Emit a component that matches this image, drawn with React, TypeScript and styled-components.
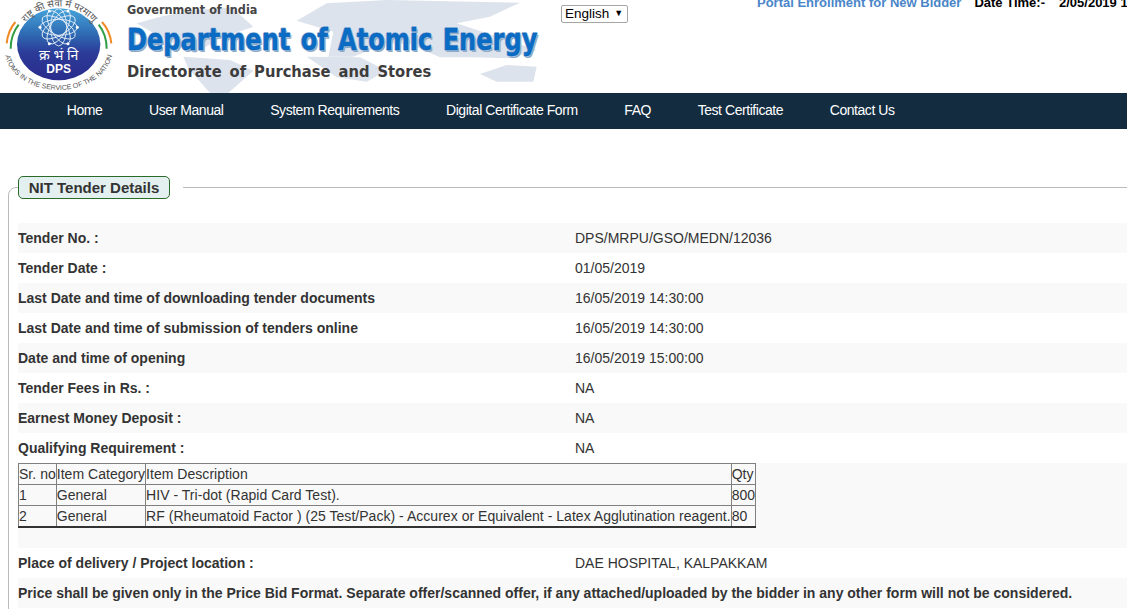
import React from 'react';
import styled, { createGlobalStyle } from 'styled-components';

const GlobalStyle = createGlobalStyle`
  html, body {
    margin: 0;
    padding: 0;
    overflow: hidden;
    background: #fff;
  }
  body {
    font-family: "Liberation Sans", Arial, sans-serif;
    font-size: 14px;
    color: #333;
  }
`;

const Page = styled.div`
  width: 1127px;
  height: 609px;
  overflow: hidden;
`;

const Header = styled.header`
  position: relative;
  height: 93px;
  display: flex;
  overflow: hidden;
`;

const LogoBox = styled.div`
  width: 127px;
  flex: none;
`;

const Banner = styled.div`
  position: relative;
  width: 434px;
  flex: none;
  display: flex;
  flex-direction: column;
`;

const WorldMap = styled.svg`
  position: absolute;
  left: 120px;
  top: 0;
`;

const GovLine = styled.div`
  font: bold 12.5px "DejaVu Sans", sans-serif;
  color: #444;
  height: 20px;
  line-height: 20px;
  white-space: nowrap;
  transform: scaleX(0.9);
  transform-origin: left;
`;

const DeptLine = styled.div`
  font: bold 31px "DejaVu Sans", sans-serif;
  color: #0a6cc4;
  height: 40px;
  line-height: 38px;
  white-space: nowrap;
  word-spacing: 2.5px;
  -webkit-text-stroke: 0.4px #0a5fb0;
  text-shadow: 1px 0 #a9c6e6, -1px 0 #a9c6e6, 0 1px #a9c6e6, 0 -1px #a9c6e6, 2px 2px #8fa9c4;
  transform: scaleX(0.777);
  transform-origin: left;
`;

const DirLine = styled.div`
  font: bold 15.5px "DejaVu Sans", sans-serif;
  color: #3c3c3c;
  height: 24px;
  line-height: 24px;
  margin-top: 0;
  white-space: nowrap;
  word-spacing: 3px;
  transform: scaleX(0.95);
  transform-origin: left;
`;

const LangSelect = styled.div`
  position: relative;
  align-self: flex-start;
  margin-top: 5px;
  width: 67px;
  height: 18px;
  flex: none;
  box-sizing: border-box;
  border: 1px solid #a6a6a6;
  border-radius: 2px;
  background: #fff;
  color: #000;
  font-size: 13.5px;
  line-height: 16px;
  padding-left: 3px;
  display: flex;
  gap: 5px;
`;

const Caret = styled.span`
  font-size: 9px;
  line-height: 14px;
`;

const TopLinks = styled.div`
  position: relative;
  margin-left: 129px;
  margin-top: -5px;
  display: flex;
  align-self: flex-start;
  white-space: nowrap;
  font-weight: bold;
  font-size: 13px;
  line-height: 16px;
`;

const EnrollLink = styled.a`
  color: #4a86c8;
  margin-right: 13px;
`;

const DateLabel = styled.span`
  color: #000;
  margin-right: 14px;
`;

const DateValue = styled.span`
  color: #000;
`;

const Nav = styled.nav`
  height: 36px;
  padding: 0 0 2px 43.5px;
  box-sizing: border-box;
  background: #132c40;
  display: flex;
  align-items: center;
`;

const NavItem = styled.a`
  color: #fff;
  font-size: 14px;
  letter-spacing: -0.45px;
  padding: 0 23.35px;
  white-space: nowrap;
`;

const Details = styled.fieldset`
  margin: 47px 0 0 8px;
  padding: 24px 0 0 9px;
  width: 1300px;
  box-sizing: border-box;
  border: 1px solid #bbb;
  border-radius: 8px 0 0 0;
  min-height: 500px;
`;

const DetailsLegend = styled.legend`
  padding: 0 13px 0 0;
`;

const LegendBadge = styled.div`
  box-sizing: border-box;
  width: 152px;
  height: 23px;
  line-height: 21px;
  text-align: center;
  background: #e3f0ef;
  border: 1px solid #2a6b2a;
  border-radius: 5px;
  font-size: 15px;
  font-weight: bold;
  color: #333;
`;

const Row = styled.div<{ $shade?: boolean }>`
  display: flex;
  height: 30px;
  align-items: center;
  background: ${({ $shade }) => ($shade ? '#f9f9f9' : 'transparent')};
`;

const Label = styled.div`
  width: 557px;
  flex: none;
  font-weight: bold;
  color: #333;
`;

const Value = styled.div`
  color: #333;
`;

const Notice = styled.div`
  font-weight: bold;
  color: #333;
  white-space: nowrap;
`;

const TableRow = styled.div`
  background: #f9f9f9;
  height: 85px;
`;

const ItemTable = styled.table`
  border-collapse: collapse;
  border: 1px solid #333;
  border-bottom-width: 2px;
`;

const Cell = styled.td`
  border: 1px solid #808080;
  padding: 0;
  height: 20px;
  line-height: 20px;
  color: #333;
  white-space: nowrap;
  font-size: 14px;
  letter-spacing: 0.03px;
`;

const Logo: React.FC = () => (
  <svg width="120" height="93" viewBox="0 0 360 279">
    <defs>
      <linearGradient id="disc" x1="0" y1="0" x2="0" y2="1">
        <stop offset="0" stopColor="#45a3da" />
        <stop offset="0.35" stopColor="#2f6cb4" />
        <stop offset="0.62" stopColor="#2c3a98" />
        <stop offset="1" stopColor="#2a2c8c" />
      </linearGradient>
      <path id="topArc" d="M60 95 A130 130 0 0 1 296 95" />
      <path id="botArc" d="M14 148 A162 122 0 0 0 338 148" />
    </defs>
    <ellipse cx="176" cy="133" rx="125" ry="108" fill="url(#disc)" />
    <g fill="none" stroke="#e8f0fa" strokeWidth="2.6">
      <ellipse cx="176" cy="82" rx="24" ry="56" />
      <ellipse cx="176" cy="82" rx="24" ry="56" transform="rotate(60 176 82)" />
      <ellipse cx="176" cy="82" rx="24" ry="56" transform="rotate(120 176 82)" />
      <ellipse cx="176" cy="82" rx="24" ry="56" transform="rotate(30 176 82)" />
      <ellipse cx="176" cy="82" rx="24" ry="56" transform="rotate(90 176 82)" />
      <ellipse cx="176" cy="82" rx="24" ry="56" transform="rotate(150 176 82)" />
    </g>
    <g fill="#fff">
      <circle cx="148" cy="131" r="4.5" />
      <circle cx="204" cy="131" r="4.5" />
      <circle cx="120" cy="82" r="4.5" />
      <circle cx="232" cy="82" r="4.5" />
      <circle cx="148" cy="33" r="4.5" />
      <circle cx="204" cy="33" r="4.5" />
    </g>
    <text x="176" y="180" textAnchor="middle" fill="#fff" fontSize="42" fontFamily="'Noto Sans', 'DejaVu Sans', sans-serif">क्र भं नि</text>
    <text x="176" y="218" textAnchor="middle" fill="#fff" fontSize="36" fontWeight="bold" fontFamily="'Liberation Sans', sans-serif">DPS</text>
    <path d="M20 130 Q24 92 46 66" fill="none" stroke="#f08a24" strokeWidth="6" />
    <path d="M32 146 Q32 104 56 74" fill="none" stroke="#2f9e44" strokeWidth="6" />
    <path d="M334 130 Q330 92 306 66" fill="none" stroke="#f08a24" strokeWidth="6" />
    <path d="M320 146 Q320 104 296 74" fill="none" stroke="#2f9e44" strokeWidth="6" />
    <text fontSize="21" fill="#555" fontFamily="'Liberation Sans', sans-serif">
      <textPath href="#botArc" startOffset="50%" textAnchor="middle">ATOMS IN THE SERVICE OF THE NATION</textPath>
    </text>
    <text fontSize="29" fill="#555" fontFamily="'Noto Sans', 'DejaVu Sans', sans-serif">
      <textPath href="#topArc" startOffset="50%" textAnchor="middle">राष्ट्र की सेवा में परमाणु</textPath>
    </text>
  </svg>
);

const MapArt: React.FC = () => (
  <WorldMap width="440" height="93" viewBox="0 0 1320 279">
    <g fill="#dde3ec">
      <path d="M50 70 L130 48 L230 30 L335 22 L400 80 L300 115 L225 160 L110 105 Z" />
      <path d="M190 170 L330 180 L400 212 L325 279 L270 279 L205 205 Z" />
      <path d="M530 62 L620 10 L800 0 L1200 8 L1110 50 L1010 70 L1250 150 L1170 175 L1050 172 L960 172 L870 132 L800 130 L700 170 L625 170 L640 95 Z" />
      <path d="M560 170 L720 172 L800 212 L740 245 L650 232 Z" />
      <path d="M1080 222 L1160 195 L1250 200 L1240 245 L1130 245 Z" />
    </g>
  </WorldMap>
);

const rows = [
  ['Tender No. :', 'DPS/MRPU/GSO/MEDN/12036'],
  ['Tender Date :', '01/05/2019'],
  ['Last Date and time of downloading tender documents', '16/05/2019 14:30:00'],
  ['Last Date and time of submission of tenders online', '16/05/2019 14:30:00'],
  ['Date and time of opening', '16/05/2019 15:00:00'],
  ['Tender Fees in Rs. :', 'NA'],
  ['Earnest Money Deposit :', 'NA'],
  ['Qualifying Requirement :', 'NA'],
];

const items = [
  ['Sr. no', 'Item Category', 'Item Description', 'Qty'],
  ['1', 'General', 'HIV - Tri-dot (Rapid Card Test).', '800'],
  ['2', 'General', 'RF (Rheumatoid Factor ) (25 Test/Pack) - Accurex or Equivalent - Latex Agglutination reagent.', '80'],
];

const navLinks = ['Home', 'User Manual', 'System Requirements', 'Digital Certificate Form', 'FAQ', 'Test Certificate', 'Contact Us'];

const App: React.FC = () => (
  <Page>
    <GlobalStyle />
    <Header>
      <MapArt />
      <LogoBox>
        <Logo />
      </LogoBox>
      <Banner>
        <GovLine>Government of India</GovLine>
        <DeptLine>Department of Atomic Energy</DeptLine>
        <DirLine>Directorate of Purchase and Stores</DirLine>
      </Banner>
      <LangSelect>
        English <Caret>▼</Caret>
      </LangSelect>
      <TopLinks>
        <EnrollLink>Portal Enrollment for New Bidder</EnrollLink>
        <DateLabel>Date Time:-</DateLabel>
        <DateValue>2/05/2019 13:20:11</DateValue>
      </TopLinks>
    </Header>
    <Nav>
      {navLinks.map((link) => (
        <NavItem key={link}>{link}</NavItem>
      ))}
    </Nav>
    <Details>
      <DetailsLegend>
        <LegendBadge>NIT Tender Details</LegendBadge>
      </DetailsLegend>
      {rows.map(([label, value], index) => (
        <Row key={label} $shade={index % 2 === 0}>
          <Label>{label}</Label>
          <Value>{value}</Value>
        </Row>
      ))}
      <TableRow>
        <ItemTable>
          <tbody>
            {items.map((item) => (
              <tr key={item[0]}>
                {item.map((cell) => (
                  <Cell key={cell}>{cell}</Cell>
                ))}
              </tr>
            ))}
          </tbody>
        </ItemTable>
      </TableRow>
      <Row>
        <Label>Place of delivery / Project location :</Label>
        <Value>DAE HOSPITAL, KALPAKKAM</Value>
      </Row>
      <Row $shade>
        <Notice>Price shall be given only in the Price Bid Format. Separate offer/scanned offer, if any attached/uploaded by the bidder in any other form will not be considered.</Notice>
      </Row>
    </Details>
  </Page>
);

export default App;
